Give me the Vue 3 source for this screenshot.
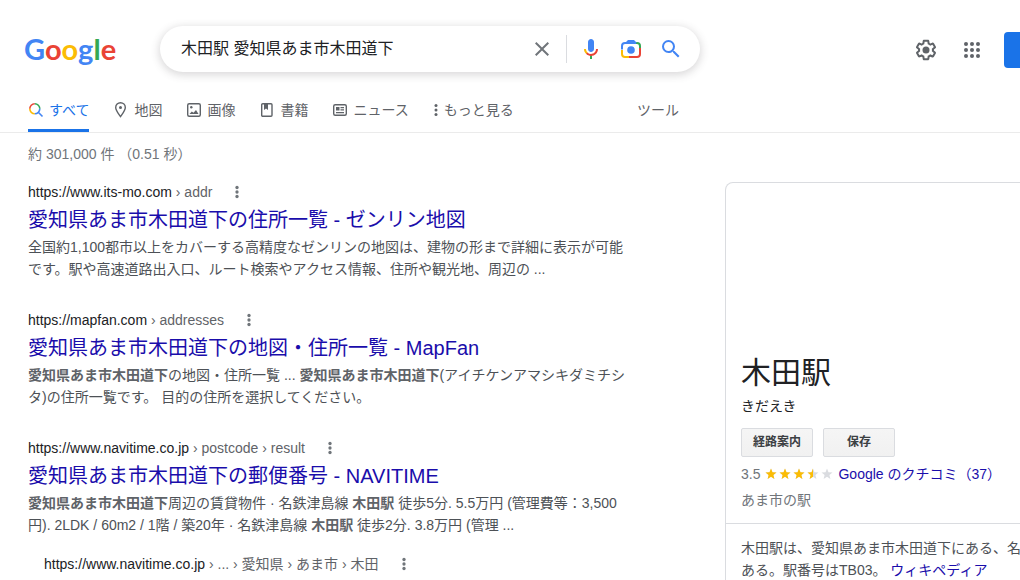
<script setup>
import { ref } from 'vue'

const query = ref('木田駅 愛知県あま市木田道下')

const tabs = [
  { icon: 'all', label: 'すべて', active: true },
  { icon: 'map', label: '地図' },
  { icon: 'image', label: '画像' },
  { icon: 'book', label: '書籍' },
  { icon: 'news', label: 'ニュース' },
]

const results = [
  {
    site: 'https://www.its-mo.com',
    path: ' › addr',
    title: '愛知県あま市木田道下の住所一覧 - ゼンリン地図',
    snippet: [
      { text: '全国約1,100都市以上をカバーする高精度なゼンリンの地図は、建物の形まで詳細に表示が可能です。駅や高速道路出入口、ルート検索やアクセス情報、住所や観光地、周辺の ...' },
    ],
  },
  {
    site: 'https://mapfan.com',
    path: ' › addresses',
    title: '愛知県あま市木田道下の地図・住所一覧 - MapFan',
    snippet: [
      { text: '愛知県あま市木田道下', strong: true },
      { text: 'の地図・住所一覧 ... ' },
      { text: '愛知県あま市木田道下', strong: true },
      { text: '(アイチケンアマシキダミチシタ)の住所一覧です。 目的の住所を選択してください。' },
    ],
  },
  {
    site: 'https://www.navitime.co.jp',
    path: ' › postcode › result',
    title: '愛知県あま市木田道下の郵便番号 - NAVITIME',
    snippet: [
      { text: '愛知県あま市木田道下', strong: true },
      { text: '周辺の賃貸物件 · 名鉄津島線 ' },
      { text: '木田駅', strong: true },
      { text: ' 徒歩5分. 5.5万円 (管理費等：3,500円). 2LDK / 60m2 / 1階 / 築20年 · 名鉄津島線 ' },
      { text: '木田駅', strong: true },
      { text: ' 徒歩2分. 3.8万円 (管理 ...' },
    ],
  },
  {
    site: 'https://www.navitime.co.jp',
    path: ' › ... › 愛知県 › あま市 › 木田',
    nested: true,
  },
]

const stars = [100, 100, 100, 50, 0]
const starPath = 'M7 1.500l1.500 3.800 4 .2-3.100 2.600 1 3.900L7 9.800 3.600 12l1-3.900L1.500 5.500l4-.2z'
const dots = [6, 12, 18]
</script>

<template>
  <div class="page">
    <header class="header">
      <div class="topbar">
        <a class="logo" href="#" aria-label="Google"><span class="blue">G</span><span class="red">o</span><span class="yellow">o</span><span class="blue">g</span><span class="green">l</span><span class="red">e</span></a>

        <form class="search" role="search" @submit.prevent>
          <input v-model="query" class="query" type="text" aria-label="検索" />
          <button class="tool" type="button" aria-label="クリア" @click="query = ''">
            <svg width="24" height="24" viewBox="0 0 24 24"><path fill="#70757a" d="M19 6.410L17.590 5 12 10.590 6.410 5 5 6.410 10.590 12 5 17.590 6.410 19 12 13.410 17.590 19 19 17.590 13.410 12z" /></svg>
          </button>
          <span class="divider"></span>
          <button class="tool" type="button" aria-label="音声で検索">
            <svg width="24" height="24" viewBox="0 0 24 24">
              <path fill="#4285f4" d="M12 15c1.660 0 3-1.310 3-2.970V5.010C15 3.350 13.660 2 12 2S9 3.340 9 5.010v7.020C9 13.690 10.340 15 12 15z" />
              <path fill="#34a853" d="M11 18.080h2V22h-2z" />
              <path fill="#fbbc04" d="M7.050 16.870C5.780 15.540 5 14.040 5 12h2c0 1.450.56 2.420 1.470 3.380v.32l-1.150 1.180z" />
              <path fill="#ea4335" d="M12 16.930a4.970 5.250 0 0 1-3.540-1.550l-1.410 1.490C8.310 18.210 10.070 19 12 19c3.870 0 6.990-2.920 6.990-7H17c0 2.920-2.240 4.930-5 4.930z" />
            </svg>
          </button>
          <button class="tool" type="button" aria-label="画像で検索">
            <svg width="24" height="24" viewBox="0 0 24 24" fill="none" stroke-width="2">
              <path stroke="#34a853" d="M16 6h2a3 3 0 0 1 3 3v2" />
              <path stroke="#fbbc04" d="M3 13v4a3 3 0 0 0 3 3h4" />
              <path stroke="#ea4335" d="M21 11v6a3 3 0 0 1-3 3h-8" />
              <path stroke="#4285f4" d="M3 12.500V9a3 3 0 0 1 3-3h11" />
              <path fill="#4285f4" d="M6 6l3-3h6l3 3z" />
              <circle cx="12" cy="13" r="3.800" fill="#4285f4" />
            </svg>
          </button>
          <button class="tool" type="submit" aria-label="Google 検索">
            <svg width="24" height="24" viewBox="0 0 24 24"><path fill="#4285f4" d="M15.500 14h-.79l-.28-.27A6.471 6.471 0 0 0 16 9.500 6.500 6.500 0 1 0 9.500 16c1.610 0 3.090-.59 4.230-1.570l.27.28v.79l5 4.990L20.490 19l-4.990-5zm-6 0C7.010 14 5 11.990 5 9.500S7.010 5 9.500 5 14 7.010 14 9.500 11.990 14 9.500 14z" /></svg>
          </button>
        </form>

        <div class="account">
          <button class="tool" type="button" aria-label="設定">
            <svg width="24" height="24" viewBox="0 0 24 24" fill="#5f6368">
              <path d="M13.850 22.250h-3.700c-.74 0-1.360-.54-1.450-1.270l-.27-1.890c-.27-.14-.53-.29-.79-.46l-1.800.72c-.7.26-1.470-.03-1.810-.65L2.200 15.530c-.35-.66-.2-1.440.36-1.880l1.530-1.190c-.01-.15-.02-.3-.02-.46 0-.15.01-.31.02-.46l-1.520-1.190c-.59-.45-.74-1.260-.37-1.880l1.850-3.190c.34-.62 1.110-.9 1.790-.63l1.810.73c.26-.17.52-.32.78-.46l.27-1.910c.09-.7.71-1.250 1.440-1.250h3.700c.74 0 1.360.54 1.450 1.270l.27 1.890c.27.14.53.29.79.46l1.800-.72c.71-.26 1.480.03 1.820.65l1.840 3.180c.36.66.2 1.440-.36 1.880l-1.520 1.190c.01.15.02.3.02.46s-.01.31-.02.46l1.520 1.190c.56.45.72 1.230.37 1.860l-1.860 3.220c-.34.62-1.110.9-1.800.63l-1.800-.72c-.26.17-.52.32-.78.46l-.27 1.910c-.1.68-.72 1.220-1.460 1.220zm-3.230-2h2.760l.37-2.550.53-.22c.44-.18.88-.44 1.340-.78l.45-.34 2.380.96 1.380-2.400-2.030-1.580.07-.56c.03-.26.06-.51.06-.78s-.03-.53-.06-.78l-.07-.56 2.030-1.580-1.390-2.400-2.390.96-.45-.35c-.42-.32-.87-.58-1.330-.77l-.52-.22-.37-2.550h-2.760l-.37 2.550-.53.21c-.44.19-.88.44-1.340.79l-.45.33-2.380-.95-1.390 2.390 2.030 1.580-.07.56a7 7 0 0 0-.06.79c0 .26.02.53.06.78l.07.56-2.030 1.580 1.380 2.400 2.390-.96.45.35c.43.33.86.58 1.330.77l.53.22z" />
              <circle cx="12" cy="12" r="3.500" />
            </svg>
          </button>
          <button class="tool" type="button" aria-label="Google アプリ">
            <svg width="24" height="24" viewBox="0 0 24 24" fill="#5f6368">
              <template v-for="y in [6, 12, 18]" :key="y">
                <circle v-for="x in [6, 12, 18]" :key="x" :cx="x" :cy="y" r="2" />
              </template>
            </svg>
          </button>
          <button class="login" type="button" aria-label="ログイン"></button>
        </div>
      </div>

      <nav class="nav">
        <a v-for="tab in tabs" :key="tab.icon" href="#" class="tab" :class="{ active: tab.active }">
          <svg v-if="tab.icon === 'all'" width="16" height="16" viewBox="0 0 16 16" fill="none" stroke-width="1.600">
            <path stroke="#ea4335" d="M1.800 6.800A5 5 0 0 1 6.800 1.800" />
            <path stroke="#34a853" d="M6.800 1.800a5 5 0 0 1 5 5" />
            <path stroke="#fbbc04" d="M6.800 11.800a5 5 0 0 1-5-5" />
            <path stroke="#4285f4" d="M11.800 6.800a5 5 0 0 1-5 5M10.300 10.300l4.200 4.200" />
          </svg>
          <svg v-else-if="tab.icon === 'map'" width="16" height="16" viewBox="0 0 16 16" fill="none" stroke="#5f6368" stroke-width="1.400">
            <path d="M7.500 14.500C5 11 2.700 8.500 2.700 5.500a4.800 4.800 0 0 1 9.600 0c0 3-2.300 5.500-4.800 9z" />
            <circle cx="7.500" cy="5.500" r="1.500" fill="#5f6368" stroke="none" />
          </svg>
          <svg v-else-if="tab.icon === 'image'" width="16" height="16" viewBox="0 0 16 16" fill="#5f6368">
            <rect x="1.700" y="1.700" width="12.600" height="12.600" rx="1.500" fill="none" stroke="#5f6368" stroke-width="1.400" />
            <circle cx="5.300" cy="5.300" r="1.200" />
            <path d="M3.500 12l2.300-2.500 1.700 1.300L10 8l2.500 4z" />
          </svg>
          <svg v-else-if="tab.icon === 'book'" width="16" height="16" viewBox="0 0 16 16" fill="#5f6368">
            <rect x="2.700" y="1.700" width="10.300" height="12.600" rx="1" fill="none" stroke="#5f6368" stroke-width="1.400" />
            <path d="M5 2h4v6L7 6.500 5 8z" />
          </svg>
          <svg v-else width="16" height="16" viewBox="0 0 16 16" fill="#5f6368">
            <rect x="1.700" y="2.700" width="12.600" height="10.600" rx="1.500" fill="none" stroke="#5f6368" stroke-width="1.400" />
            <path d="M4 5h3.500v3.500H4zM8.500 5H12v1.200H8.500zM8.500 7.300H12v1.200H8.500zM4 10h8v1.200H4z" />
          </svg>
          <span>{{ tab.label }}</span>
        </a>
        <button class="tab" type="button">
          <svg width="6" height="16" viewBox="0 0 6 16" fill="#5f6368">
            <circle cx="3" cy="3.500" r="1.500" /><circle cx="3" cy="8" r="1.500" /><circle cx="3" cy="12.500" r="1.500" />
          </svg>
          <span>もっと見る</span>
        </button>
        <button class="tab tools" type="button">ツール</button>
      </nav>
    </header>

    <div class="content">
      <main class="results">
        <p class="stats">約 301,000 件 （0.51 秒）</p>
        <article v-for="(item, i) in results" :key="i" class="result" :class="{ nested: item.nested }">
          <div class="source">
            <cite>{{ item.site }}<span>{{ item.path }}</span></cite>
            <button class="more" type="button" aria-label="この検索結果について">
              <svg width="24" height="18" viewBox="0 0 24 24" fill="#70757a">
                <circle v-for="y in dots" :key="y" cx="12" :cy="y" r="2.200" />
              </svg>
            </button>
          </div>
          <h3 v-if="item.title"><a href="#">{{ item.title }}</a></h3>
          <p v-if="item.snippet" class="snippet">
            <template v-for="(part, j) in item.snippet" :key="j"><b v-if="part.strong">{{ part.text }}</b><template v-else>{{ part.text }}</template></template>
          </p>
        </article>
      </main>

      <aside class="panel">
        <section class="place">
          <h2>木田駅</h2>
          <p class="kana">きだえき</p>
          <div class="actions">
            <button type="button">経路案内</button>
            <button type="button">保存</button>
          </div>
          <div class="rating">
            <span>3.5</span>
            <span class="stars" role="img" aria-label="5 点中 3.5 点">
              <svg v-for="(fill, i) in stars" :key="i" width="14" height="14" viewBox="0 0 14 14">
                <clipPath :id="'star' + i"><rect height="14" :width="fill * 14 / 100" /></clipPath>
                <path fill="#dadce0" :d="starPath" />
                <path fill="#fbbc04" :d="starPath" :clip-path="'url(#star' + i + ')'" />
              </svg>
            </span>
            <a href="#">Google のクチコミ（37）</a>
          </div>
          <p class="kind">あま市の駅</p>
        </section>
        <p class="about">木田駅は、愛知県あま市木田道下にある、名鉄津島線の駅で<br />ある。駅番号はTB03。 <a href="#">ウィキペディア</a></p>
      </aside>
    </div>
  </div>
</template>

<style>
body {
  margin: 0;
  background: #fff;
}
</style>

<style scoped>
.page {
  display: flex;
  flex-direction: column;
  min-height: 100vh;
  overflow: hidden;
  color: #202124;
  font: 14px/22px "Liberation Sans", "Noto Sans CJK JP", sans-serif;
}
.page * {
  box-sizing: border-box;
}
a {
  color: #1a0dab;
  text-decoration: none;
}
p, h2, h3 {
  margin: 0;
  font-weight: 400;
}
button {
  padding: 0;
  border: 0;
  background: none;
  color: inherit;
  font: inherit;
  cursor: pointer;
}
svg {
  display: block;
  flex: none;
}

.header {
  display: flex;
  flex-direction: column;
  gap: 16px;
  padding-top: 26px;
  border-bottom: 1px solid #ebebeb;
}
.topbar {
  display: flex;
  align-items: center;
  padding-left: 24px;
}
.logo {
  flex: none;
  width: 136px;
  font: 700 29px/46px Lato, sans-serif;
}
.blue { color: #4285f4; }
.red { color: #ea4335; }
.yellow { color: #fbbc05; }
.green { color: #34a853; }

.search {
  display: flex;
  flex: 0 1 540px;
  align-items: center;
  height: 46px;
  padding-right: 9px;
  border-radius: 23px;
  background: #fff;
  box-shadow: 0 2px 8px 1px rgba(64, 60, 67, 0.2);
}
.query {
  flex: 1;
  min-width: 0;
  padding: 0 0 0 21px;
  border: 0;
  outline: 0;
  background: none;
  color: #202124;
  font: inherit;
  font-size: 16px;
}
.tool {
  display: grid;
  flex: none;
  place-items: center;
  width: 40px;
  height: 40px;
}
.divider {
  height: 28px;
  margin: 0 4px;
  border-left: 1px solid #dadce0;
}
.account {
  display: flex;
  align-items: center;
  gap: 6px;
  margin-left: auto;
  padding-top: 2px;
}
.login {
  width: 16px;
  height: 36px;
  margin-left: 6px;
  border-radius: 4px 0 0 4px;
  background: #1a73e8;
}

.nav {
  display: flex;
  gap: 24px;
  max-width: 679px;
  padding-left: 28px;
}
.nav .tab {
  position: relative;
  display: flex;
  align-items: center;
  gap: 5px;
  height: 44px;
  color: #5f6368;
  white-space: nowrap;
}
.nav .active {
  color: #1a73e8;
}
.nav .active::after {
  position: absolute;
  right: 0;
  bottom: 0;
  left: 0;
  height: 3px;
  background: #1a73e8;
  content: "";
}
.nav .tools {
  margin-left: auto;
}

.content {
  display: flex;
  flex: 1;
  gap: 97px;
  padding-left: 28px;
}
.results {
  flex: 0 0 600px;
  padding-top: 10px;
}
.stats {
  margin-bottom: 15px;
  color: #70757a;
}
.result {
  margin-bottom: 28px;
}
.source {
  display: flex;
  gap: 13px;
  align-items: center;
  height: 24px;
}
cite {
  font-style: normal;
  white-space: pre;
}
cite span {
  color: #5f6368;
}
h3 {
  padding: 1px 0;
  font-size: 20px;
  line-height: 30px;
}
.snippet {
  color: #4d5156;
}
.snippet b {
  color: #5f6368;
}
.nested {
  margin: -12px 0 0 16px;
}

.panel {
  flex: 1 0 369px;
  margin-top: 49px;
  border: 1px solid #dadce0;
  border-bottom: 0;
  border-radius: 8px 8px 0 0;
}
.place {
  padding: 172px 15px 12px;
  border-bottom: 1px solid #dadce0;
}
h2 {
  font-size: 30px;
  line-height: 36px;
}
.kana {
  margin: 4px 0 11px;
}
.actions {
  display: flex;
  gap: 10px;
}
.actions button {
  width: 72px;
  height: 29px;
  padding-bottom: 2px;
  border: 1px solid #dadce0;
  border-radius: 2px;
  background: linear-gradient(#f5f5f5, #f1f1f1);
  color: #3c4043;
  font-size: 12px;
  font-weight: 700;
}
.rating {
  display: flex;
  align-items: center;
  gap: 4px;
  margin: 6px 0 4px;
  color: #70757a;
}
.stars {
  display: flex;
}
.kind {
  color: #70757a;
}
.about {
  padding: 13px 15px 0;
  color: #4d5156;
  white-space: nowrap;
}
</style>
